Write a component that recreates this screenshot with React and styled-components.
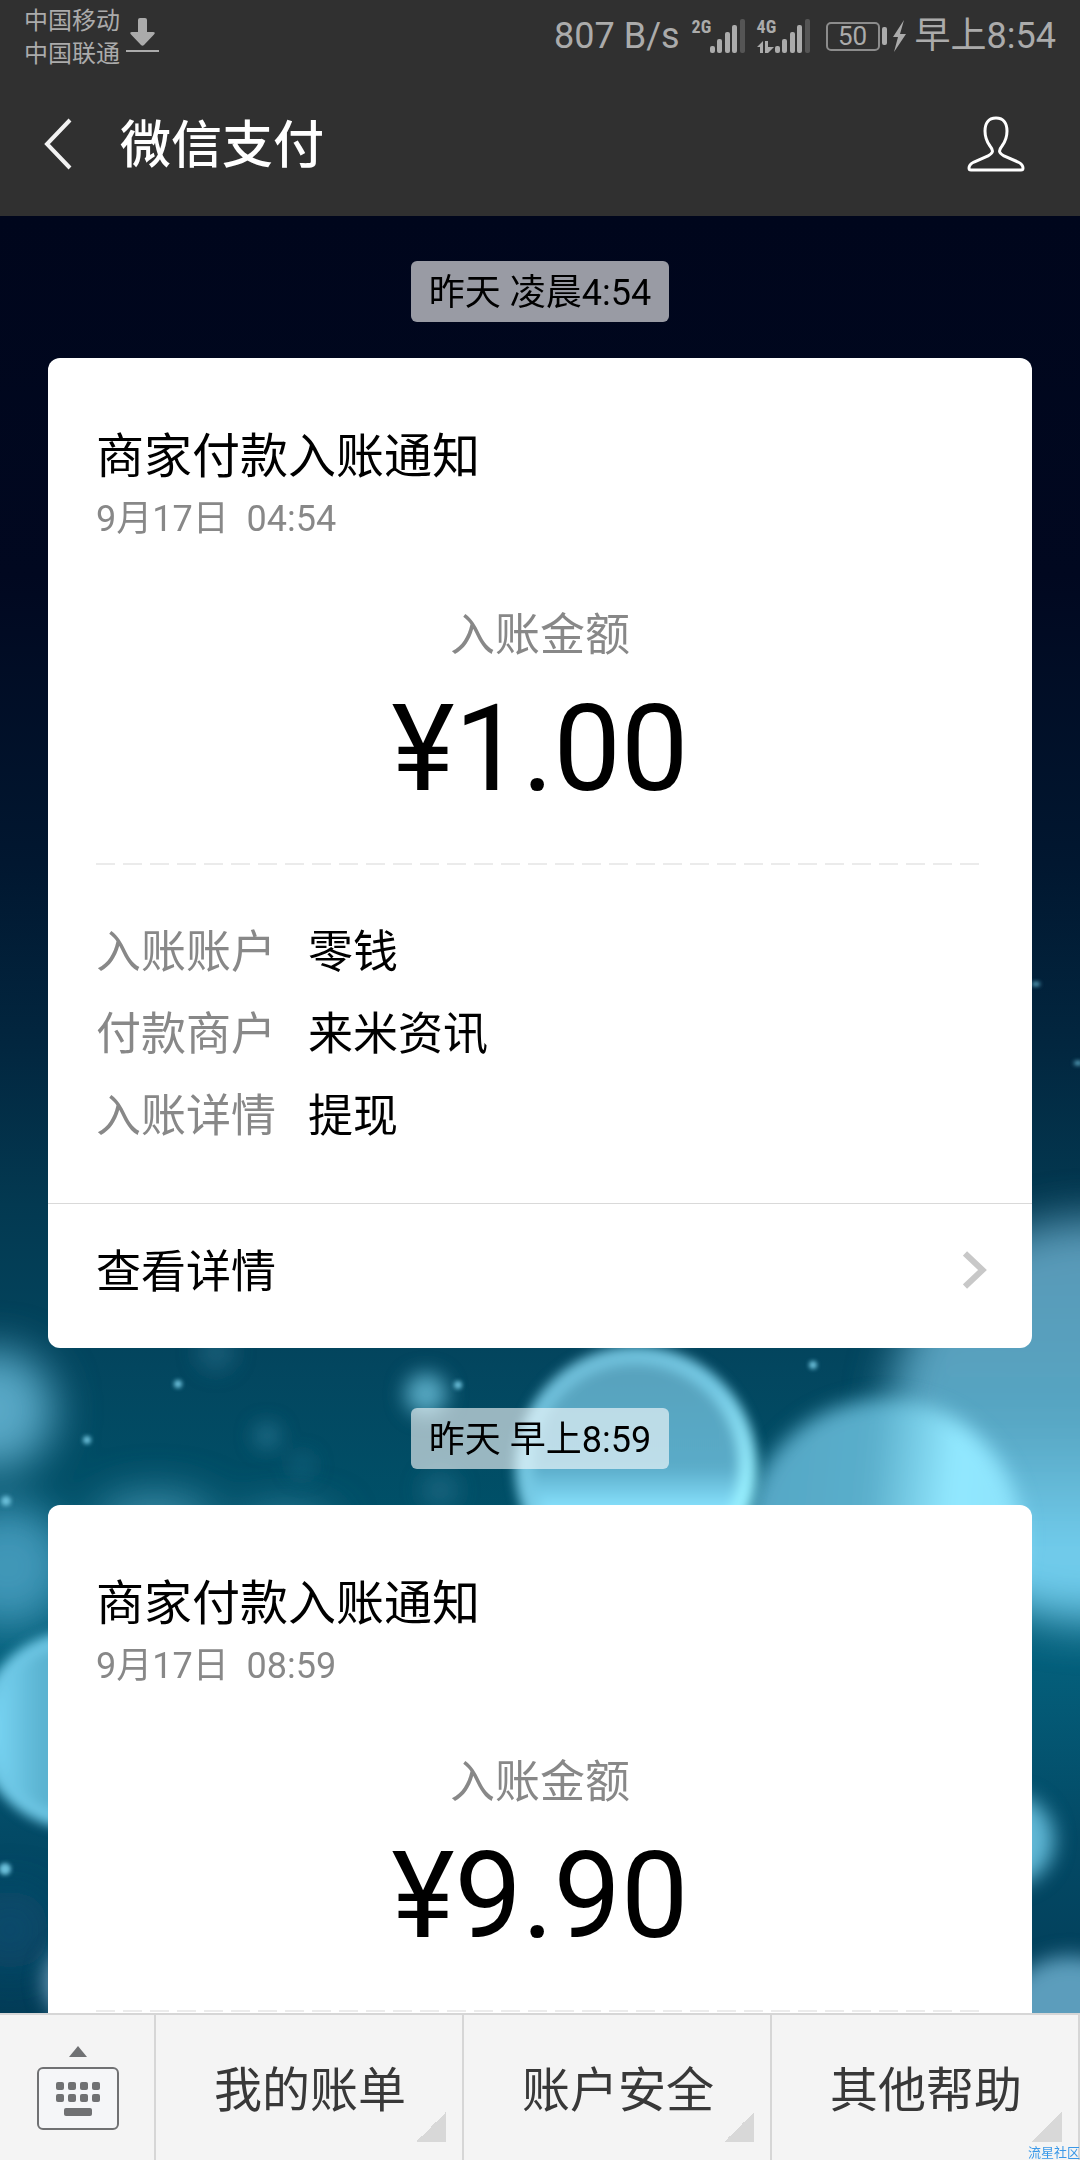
import React from "react";
import styled, { createGlobalStyle } from "styled-components";

const messages = [
  {
    id: 1,
    time: "昨天 凌晨4:54",
    date: "9月17日\u00a0\u00a004:54",
    amount: "¥1.00",
    merchant: "来米资讯",
  },
  {
    id: 2,
    time: "昨天 早上8:59",
    date: "9月17日\u00a0\u00a008:59",
    amount: "¥9.90",
    merchant: "来米资讯",
  },
];

const menus = ["我的账单", "账户安全", "其他帮助"];

const dots = [
  [178, 1384, 4],
  [87, 1440, 4],
  [6, 1501, 5],
  [458, 1385, 4],
  [813, 1365, 4],
  [5, 1869, 6],
];

const SignalBars = () => (
  <svg width="35" height="34" viewBox="0 0 35 34" aria-hidden="true">
    <g fill="#ababab">
      <rect x="0" y="27" width="5" height="7" rx="2" />
      <rect x="7" y="20" width="5" height="14" rx="2" />
      <rect x="15" y="13" width="5" height="21" rx="2" />
      <rect x="22" y="6" width="5" height="28" rx="2" />
    </g>
    <rect x="30" y="0" width="5" height="34" rx="2" fill="#555" />
  </svg>
);

const Backdrop = () => (
  <BackdropSvg viewBox="0 216 1080 1797" preserveAspectRatio="none" aria-hidden="true">
    <defs>
      <linearGradient id="sea" x1="0" y1="0" x2="0" y2="1">
        <stop offset="0" stopColor="#00061c" />
        <stop offset="0.2" stopColor="#010820" />
        <stop offset="0.36" stopColor="#011730" />
        <stop offset="0.46" stopColor="#02263f" />
        <stop offset="0.55" stopColor="#033951" />
        <stop offset="0.64" stopColor="#03465f" />
        <stop offset="0.72" stopColor="#005068" />
        <stop offset="0.8" stopColor="#04607c" />
        <stop offset="0.9" stopColor="#034a66" />
        <stop offset="1" stopColor="#033d58" />
      </linearGradient>
      <linearGradient id="haze" x1="0" y1="0" x2="0" y2="1">
        <stop offset="0" stopColor="#5a97b5" />
        <stop offset="0.5" stopColor="#57a6c3" />
        <stop offset="0.85" stopColor="#74d0f0" />
        <stop offset="1" stopColor="#5cb8d8" />
      </linearGradient>
      <linearGradient id="bubble" x1="0" y1="0" x2="0" y2="1">
        <stop offset="0.1" stopColor="#58a3be" />
        <stop offset="0.5" stopColor="#5aabc8" />
        <stop offset="0.68" stopColor="#86e0fc" />
      </linearGradient>
      <linearGradient id="rim" x1="0.2" y1="0" x2="0.7" y2="0.8">
        <stop offset="0" stopColor="#6dbdd8" />
        <stop offset="0.5" stopColor="#76cbe6" />
        <stop offset="1" stopColor="#98f0ff" />
      </linearGradient>
      <linearGradient id="dome" x1="0" y1="0.2" x2="1" y2="0.3">
        <stop offset="0.1" stopColor="#56a8c6" />
        <stop offset="0.45" stopColor="#5aaecb" />
        <stop offset="0.75" stopColor="#92e8ff" />
        <stop offset="1" stopColor="#8ce2fb" />
      </linearGradient>
      <linearGradient id="side" x1="0" y1="0" x2="1" y2="0">
        <stop offset="0" stopColor="#7fdcfb" />
        <stop offset="0.3" stopColor="#5cb4d2" />
        <stop offset="1" stopColor="#5a9cba" />
      </linearGradient>
      <filter id="soft" x="-50%" y="-50%" width="200%" height="200%">
        <feGaussianBlur stdDeviation="22" />
      </filter>
      <filter id="mid" x="-50%" y="-50%" width="200%" height="200%">
        <feGaussianBlur stdDeviation="10" />
      </filter>
      <filter id="fine" x="-50%" y="-50%" width="200%" height="200%">
        <feGaussianBlur stdDeviation="6" />
      </filter>
      <filter id="dot" x="-100%" y="-100%" width="300%" height="300%">
        <feGaussianBlur stdDeviation="2" />
      </filter>
    </defs>
    <rect y="216" width="1080" height="1797" fill="url(#sea)" />
    <g filter="url(#soft)">
      <circle cx="-6" cy="1410" r="60" fill="#58a8c6" />
      <circle cx="8" cy="1566" r="62" fill="#3f97b8" />
      <ellipse cx="155" cy="1520" rx="60" ry="26" fill="#3d8fab" />
      <ellipse cx="285" cy="1528" rx="50" ry="16" fill="#3d8fab" />
      <circle cx="1092" cy="1422" r="203" fill="url(#haze)" />
      <circle cx="10" cy="1930" r="40" fill="#10547a" opacity="0.5" />
    </g>
    <g filter="url(#mid)">
      <circle cx="216" cy="1352" r="20" fill="#2c7a96" opacity="0.4" />
      <circle cx="267" cy="1436" r="13" fill="#3d8fab" opacity="0.5" />
      <circle cx="302" cy="1465" r="12" fill="#2c7a96" opacity="0.4" />
      <circle cx="426" cy="1394" r="21" fill="#56a8c2" />
      <circle cx="440" cy="1490" r="20" fill="#2c7a96" opacity="0.4" />
      <circle cx="884" cy="1537" r="138" fill="url(#dome)" />
      <circle cx="1008" cy="1840" r="46" fill="#60b8d6" />
      <circle cx="1070" cy="2028" r="72" fill="#5b9dbc" />
      <circle cx="86" cy="1982" r="42" fill="#6a9ab8" />
    </g>
    <g filter="url(#fine)">
      <circle cx="636" cy="1467" r="112" fill="url(#bubble)" stroke="url(#rim)" strokeWidth="18" />
      <circle cx="77" cy="1730" r="92" fill="url(#side)" stroke="#6ec8e6" strokeWidth="14" />
    </g>
    <g fill="#6cc0da" filter="url(#dot)">
      {dots.map(([x, y, r]) => (
        <circle key={`${x}-${y}`} cx={x} cy={y} r={r} />
      ))}
      <ellipse cx="1036" cy="984" rx="4" ry="2" />
      <ellipse cx="1078" cy="1063" rx="4" ry="2" />
    </g>
  </BackdropSvg>
);

const Message = ({ time, date, amount, merchant }) => {
  return (
    <>
      <TimePill>{time}</TimePill>
      <Card>
        <CardTitle>商家付款入账通知</CardTitle>
        <CardDate>{date}</CardDate>
        <AmountLabel>入账金额</AmountLabel>
        <Amount>{amount}</Amount>
        <Dashes />
        <Details>
          <dt>入账账户</dt>
          <dd>零钱</dd>
          <dt>付款商户</dt>
          <dd>{merchant}</dd>
          <dt>入账详情</dt>
          <dd>提现</dd>
        </Details>
        <CardLink href="#detail">
          查看详情
          <svg width="24" height="38" viewBox="0 0 24 38" aria-hidden="true">
            <path d="M2 2.5L19.500 19L2 35.500" fill="none" stroke="#c8c8c8" strokeWidth="6" />
          </svg>
        </CardLink>
      </Card>
    </>
  );
};

const App = () => {
  return (
    <Screen>
      <GlobalStyle />
      <StatusBar>
        <Carriers>
          <span>中国移动</span>
          <span>中国联通</span>
        </Carriers>
        <svg width="33" height="36" viewBox="0 0 33 36" aria-hidden="true">
          <path
            d="M14 0h5q2 0 2 2v12h6q3 0 1 2.500L18 27q-1.500 1.500-3 0L5 16.500Q3 14 6 14h6V2q0-2 2-2z"
            fill="#ababab"
          />
          <rect y="32" width="33" height="2" fill="#ababab" />
        </svg>
        <StatusRight>
          <span>807 B/s</span>
          <Signal>
            <Network>2G</Network>
            <SignalBars />
          </Signal>
          <Signal>
            <Network>
              4G
              <svg width="17" height="12" viewBox="0 0 17 12" aria-hidden="true">
                <path d="M0 6L6 0v12H3V6zM8 0h3v6h6l-6 6H8z" fill="#ababab" />
              </svg>
            </Network>
            <SignalBars />
          </Signal>
          <Battery>
            <BatteryLevel>50</BatteryLevel>
            <svg width="26" height="34" viewBox="0 0 26 34" aria-hidden="true">
              <rect x="2" y="8" width="5" height="18" rx="2" fill="#ababab" />
              <path d="M24 1L13 18h5l-4 15 12-18h-6z" fill="#ababab" />
            </svg>
          </Battery>
          <span>早上8:54</span>
        </StatusRight>
      </StatusBar>
      <Header>
        <IconButton aria-label="返回">
          <svg width="28" height="52" viewBox="0 0 28 52" aria-hidden="true">
            <path d="M26 2L3 26L26 50" fill="none" stroke="#f2f2f2" strokeWidth="4" />
          </svg>
        </IconButton>
        <h1>微信支付</h1>
        <IconButton aria-label="个人信息">
          <svg width="58" height="56" viewBox="0 0 58 56" aria-hidden="true">
            <path
              d="M29 2C21 2 18 8 18 15C18 22 20 26 23 30C27 35 26 37 21 40L7 46C3 48 2 50 2 52Q2 54 4 54H54Q56 54 56 52C56 50 55 48 51 46L37 40C32 37 31 35 35 30C38 26 40 22 40 15C40 8 37 2 29 2Z"
              fill="none"
              stroke="#fff"
              strokeWidth="3"
            />
          </svg>
        </IconButton>
      </Header>
      <Chat>
        <Backdrop />
        <MessageList>
          {messages.map((message) => (
            <Message key={message.id} {...message} />
          ))}
        </MessageList>
      </Chat>
      <MenuBar>
        <KeyboardButton aria-label="键盘">
          <svg width="82" height="84" viewBox="0 0 82 84" fill="#707173" aria-hidden="true">
            <path d="M41 0L50 11H32z" />
            <rect x="1" y="22" width="80" height="61" rx="5" fill="#f5f6f8" stroke="#707173" strokeWidth="2" />
            {[0, 1, 2, 3].map((col) => (
              <g key={col}>
                <rect x={19 + col * 12} y="36" width="8" height="8" rx="2" />
                <rect x={19 + col * 12} y="48" width="8" height="8" rx="2" />
              </g>
            ))}
            <rect x="27" y="62" width="28" height="8" rx="2" />
          </svg>
        </KeyboardButton>
        {menus.map((menu) => (
          <MenuButton key={menu}>{menu}</MenuButton>
        ))}
        <Watermark>流星社区</Watermark>
      </MenuBar>
    </Screen>
  );
};

export default App;

const GlobalStyle = createGlobalStyle`
  * {
    box-sizing: border-box;
  }
  body {
    margin: 0;
    font-family: Roboto, "Noto Sans CJK SC", sans-serif;
    color: #000;
  }
  h1, h2, p, dl, dd {
    margin: 0;
    font-weight: 400;
  }
  button {
    padding: 0;
    border: 0;
    background: none;
    font: inherit;
    color: inherit;
  }
  svg {
    display: block;
    flex-shrink: 0;
  }
`;
const Screen = styled.div`
  display: flex;
  flex-direction: column;
  height: 100vh;
  overflow: hidden;
`;
const StatusBar = styled.div`
  display: flex;
  align-items: center;
  height: 72px;
  padding: 0 24px;
  background: #303030;
  color: #ababab;
  font-size: 36px;
  line-height: 42px;
  white-space: nowrap;
`;
const Carriers = styled.div`
  display: flex;
  flex-direction: column;
  margin-right: 6px;
  padding-top: 4px;
  font-size: 24px;
  line-height: 33px;
`;
const StatusRight = styled.div`
  display: flex;
  align-items: center;
  margin-left: auto;
`;
const Signal = styled.div`
  display: flex;
  margin-left: 12px;
`;
const Network = styled.span`
  display: flex;
  flex-direction: column;
  justify-content: space-between;
  width: 18px;
  font-family: "Roboto Condensed", "Liberation Sans Narrow", Roboto, sans-serif;
  font-size: 18px;
  font-weight: 700;
  line-height: 16px;
`;
const Battery = styled.div`
  display: flex;
  align-items: center;
  margin: 0 9px 0 16px;
`;
const BatteryLevel = styled.span`
  width: 54px;
  border: 2px solid #8c8c8c;
  border-radius: 5px;
  font-size: 26px;
  line-height: 25px;
  text-align: center;
`;
const Header = styled.header`
  display: flex;
  align-items: center;
  height: 144px;
  padding: 0 55px 0 44px;
  background: #303030;
  color: #fff;

  h1 {
    flex: 1;
    margin-left: 48px;
    padding-bottom: 6px;
    font-size: 51px;
    font-weight: 500;
  }
`;
const IconButton = styled.button`
  display: flex;
`;
const Chat = styled.main`
  position: relative;
  flex: 1;
  min-height: 0;
`;
const BackdropSvg = styled.svg`
  position: absolute;
  inset: 0;
  width: 100%;
  height: 100%;
`;
const MessageList = styled.div`
  position: relative;
  display: flex;
  flex-direction: column;
  align-items: center;
  height: 100%;
  padding: 45px 48px 0;
  overflow-y: auto;
  scrollbar-width: none;
`;
const TimePill = styled.p`
  padding: 3px 18px 0;
  border-radius: 6px;
  background: rgba(255, 255, 255, 0.6);
  font-size: 36px;
  line-height: 58px;
`;
const Card = styled.article`
  width: 100%;
  margin: 36px 0 60px;
  padding-top: 69px;
  border-radius: 12px;
  background: #fff;
`;
const CardTitle = styled.h2`
  padding: 0 48px;
  font-size: 48px;
  line-height: 60px;
`;
const CardDate = styled.p`
  margin-top: 10px;
  padding: 0 48px;
  color: #888;
  font-size: 36px;
  line-height: 44px;
`;
const AmountLabel = styled.p`
  margin-top: 65px;
  color: #888;
  font-size: 45px;
  line-height: 60px;
  text-align: center;
`;
const Amount = styled.p`
  margin-top: 13px;
  font-size: 120px;
  line-height: 140px;
  text-align: center;
`;
const Dashes = styled.div`
  height: 2px;
  margin: 44px 48px 47px;
  background: repeating-linear-gradient(
    90deg,
    #ebebeb 0 19px,
    transparent 19px 27px
  );
`;
const Details = styled.dl`
  display: grid;
  grid-template-columns: auto 1fr;
  column-gap: 32px;
  padding: 0 48px 45px;
  font-size: 45px;
  line-height: 82px;

  dt {
    color: #888;
  }
`;
const CardLink = styled.a`
  display: flex;
  align-items: center;
  justify-content: space-between;
  padding: 39px 45px 45px 48px;
  border-top: 1px solid #d9d9d9;
  color: #000;
  font-size: 45px;
  line-height: 60px;
  text-decoration: none;

  svg {
    margin-bottom: 6px;
  }
`;
const MenuBar = styled.nav`
  position: relative;
  display: flex;
  height: 147px;
  flex-shrink: 0;
  border-top: 2px solid #d6d6d6;
  background: #f4f4f4;
  color: #383838;
  font-size: 48px;
`;
const KeyboardButton = styled.button`
  display: flex;
  align-items: center;
  justify-content: center;
  width: 156px;
  padding-left: 2px;
  border-right: 2px solid #d6d6d6;
`;
const MenuButton = styled.button`
  position: relative;
  flex: 1;
  padding: 0 0 4px 2px;
  border-right: 2px solid #d6d6d6;

  &::after {
    content: "";
    position: absolute;
    right: 16px;
    bottom: 18px;
    width: 30px;
    height: 30px;
    background: linear-gradient(135deg, transparent 50%, #d8d8d8 50%);
  }
`;
const Watermark = styled.span`
  position: absolute;
  right: 0;
  bottom: 0;
  color: #3a98e8;
  font-size: 13px;
  line-height: 14px;
`;
